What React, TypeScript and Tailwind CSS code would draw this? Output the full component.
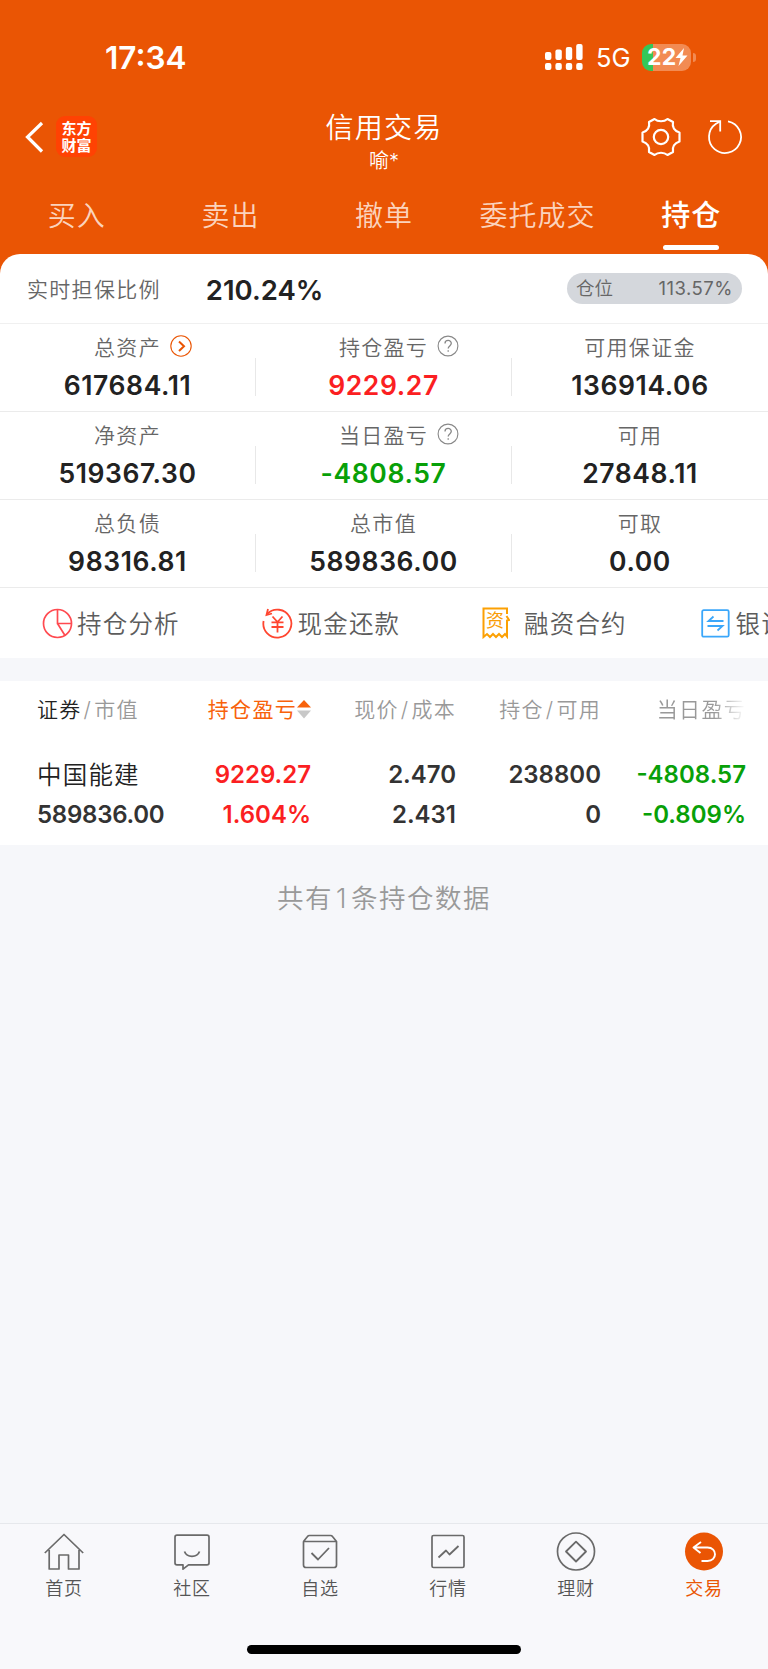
import type { ReactNode } from 'react';
import clsx from 'clsx';

type Metric = { label: string; value: string; color?: string; icon?: 'more' | 'help' };

const tabs = [
  { name: '买入' },
  { name: '卖出' },
  { name: '撤单' },
  { name: '委托成交' },
  { name: '持仓', active: true },
];

const metrics: Metric[][] = [
  [
    { label: '总资产', value: '617684.11', icon: 'more' },
    { label: '持仓盈亏', value: '9229.27', color: 'text-[#fb1f22]', icon: 'help' },
    { label: '可用保证金', value: '136914.06' },
  ],
  [
    { label: '净资产', value: '519367.30' },
    { label: '当日盈亏', value: '-4808.57', color: 'text-[#08a008]', icon: 'help' },
    { label: '可用', value: '27848.11' },
  ],
  [
    { label: '总负债', value: '98316.81' },
    { label: '总市值', value: '589836.00' },
    { label: '可取', value: '0.00' },
  ],
];

function StatusBar() {
  return (
    <div className="flex h-[100px] items-center pt-[14px] pl-[105px] text-white">
      <span className="w-[439px] pt-px text-[31.5px] leading-none font-semibold">17:34</span>
      <svg width="40" height="28" viewBox="0 0 40 28" fill="currentColor">
        <rect x="1" y="9" width="6.4" height="8" rx="2" />
        <rect x="11.4" y="6.6" width="6.4" height="10.4" rx="2" />
        <rect x="21.8" y="4" width="6.4" height="13" rx="2" />
        <rect x="32.2" y="1" width="6.4" height="16" rx="2" />
        <rect x="1" y="20" width="6.4" height="7" rx="2" />
        <rect x="11.4" y="20" width="6.4" height="7" rx="2" />
        <rect x="21.8" y="20" width="6.4" height="7" rx="2" />
        <rect x="32.2" y="20" width="6.4" height="7" rx="2" />
      </svg>
      <span className="ml-[12px] w-[46px] pt-[2px] text-[25.5px] leading-none">5G</span>
      <div className="flex h-[27px] w-[49px] items-center rounded-[9px] bg-[linear-gradient(to_right,#34c759_11px,#f28b53_11px)] pl-[5px]">
        <span className="text-[23px] leading-none font-bold tracking-[0.2px]">22</span>
        <svg width="13" height="18" viewBox="0 0 13 18" fill="currentColor" className="-ml-px shrink-0">
          <path d="M9 0 0.500 10H5.500L3.500 18 12.500 7.500H7.500z" />
        </svg>
      </div>
      <span className="ml-[2px] h-[9px] w-[3px] rounded-r-full bg-[#f28b53]" />
    </div>
  );
}

function NavBar() {
  return (
    <div className="flex h-[86px] pl-[24px] text-white">
      <svg width="20" height="32" viewBox="0 0 20 32" fill="none" stroke="currentColor" strokeWidth="3.2" className="mt-[21px]">
        <path d="M18 2 3.500 16 18 30.500" />
      </svg>
      <div className="mt-[16px] ml-[12px] flex h-[41px] w-[41px] flex-col items-center justify-center rounded-[9px] bg-[#ff4203] text-[15px] leading-[17px] font-bold">
        <span>东方</span>
        <span>财富</span>
      </div>
      <div className="ml-[187px] flex w-[200px] flex-col items-center pt-[11px]">
        <h1 className="text-[28px] leading-[34px] font-[350] tracking-[1.2px]">信用交易</h1>
        <p className="mt-[4px] text-[20px] leading-[24px] font-[350]">喻*</p>
      </div>
      <svg width="40" height="40" viewBox="-20 -20 40 40" fill="none" stroke="currentColor" strokeWidth="2.200" strokeLinejoin="round" className="mt-[17px] ml-[157px]">
        <circle r="7.200" />
        <path d="M-6.500 -18C-3 -15 3 -15 6.500 -18L12 -15C11 -10 13.500 -6 18.500 -4.500V4.500C13.500 6 11 10 12 15L6.500 18C3 15 -3 15 -6.500 18L-12 15C-11 10 -13.500 6 -18.500 4.500V-4.500C-13.500 -6 -11 -10 -12 -15Z" />
      </svg>
      <svg width="40" height="40" viewBox="-20 -20 40 40" fill="none" stroke="currentColor" strokeWidth="1.800" className="mt-[17px] ml-[24px]">
        <path d="M3 -15.700A16 16 0 1 1 -9 -13.200L-5 -15.500" />
        <path d="M-15 -15.800H-4.800V-5.500" />
      </svg>
    </div>
  );
}

function TabBar() {
  return (
    <div className="grid h-[68px] grid-cols-5">
      {tabs.map((tab) => (
        <div key={tab.name} className="flex flex-col items-center">
          <span
            className={clsx(
              'mt-[12px] leading-[36px] tracking-[1px] whitespace-nowrap',
              tab.active ? 'text-[29px] font-medium text-white' : 'text-[28px] font-[350] text-[#fbd3bd]',
            )}
          >
            {tab.name}
          </span>
          {tab.active && <span className="mt-[11px] h-[5px] w-[56px] rounded-full bg-white" />}
        </div>
      ))}
    </div>
  );
}

function LabelIcon({ kind }: { kind: 'more' | 'help' }) {
  if (kind === 'more') {
    return (
      <svg width="22" height="22" viewBox="0 0 22 22" fill="none" stroke="#ea5504" className="absolute top-px left-full ml-[9px]">
        <circle cx="11" cy="11" r="10.200" strokeWidth="1.100" />
        <path d="M9 6.500 14 11.300 9 16" strokeWidth="2" />
      </svg>
    );
  }
  return (
    <svg width="22" height="22" viewBox="0 0 22 22" fill="none" stroke="#888" strokeWidth="1.100" className="absolute top-px left-full ml-[9px]">
      <circle cx="11" cy="11" r="9.900" />
      <path d="M8 8.500C8 4.500 14.300 4.500 14.300 8.300 14.300 10.800 11.200 11 11.200 13.500" strokeWidth="1.300" />
      <path d="M11.200 15.300V16.700" strokeWidth="1.300" />
    </svg>
  );
}

function MetricCell({ metric, last }: { metric: Metric; last: boolean }) {
  return (
    <div className="flex">
      <div className="flex flex-1 flex-col items-center">
        <div className="relative mt-[10px] text-[21px] leading-[28px] font-[350] tracking-[1.3px] text-[#666]">
          {metric.label}
          {metric.icon && <LabelIcon kind={metric.icon} />}
        </div>
        <div className={clsx('mt-[8px] text-[26.5px] leading-[31px] font-semibold tracking-[0.600px]', metric.color ?? 'text-[#222]')}>
          {metric.value}
        </div>
      </div>
      {!last && <div className="mt-[34px] h-[38px] w-px bg-[#e8e8e8]" />}
    </div>
  );
}

function Summary() {
  return (
    <section className="rounded-t-[20px] bg-white">
      <div className="flex h-[70px] items-center border-b border-[#f0f0f0] pr-[26px] pl-[27px]">
        <span className="pt-[2px] text-[21px] font-[350] tracking-[1.3px] text-[#666]">实时担保比例</span>
        <span className="ml-[45px] pt-[2px] text-[27.5px] leading-[32px] font-semibold text-[#222]">210.24%</span>
        <div className="ml-auto flex h-[31px] w-[175px] items-center justify-between rounded-full bg-[#d4d7dc] pr-[9px] pl-[9px] text-[18.5px] font-[350] text-[#666]">
          <span>仓位</span>
          <span className="font-normal tracking-[0.500px]">113.57%</span>
        </div>
      </div>
      {metrics.map((row) => (
        <div key={row[0].label} className="grid h-[88px] grid-cols-3 border-b border-[#ebebeb]">
          {row.map((metric, i) => (
            <MetricCell key={metric.label} metric={metric} last={i === 2} />
          ))}
        </div>
      ))}
    </section>
  );
}

function Action({ icon, label, gap }: { icon: ReactNode; label: string; gap?: string }) {
  return (
    <div className="flex w-[219.500px] shrink-0 items-center">
      {icon}
      <span className={clsx('pt-[2px] text-[24.5px] leading-[30px] font-[350] tracking-[1.200px] whitespace-nowrap text-[#5c5c5c]', gap ?? 'ml-[4px]')}>
        {label}
      </span>
    </div>
  );
}

function QuickActions() {
  return (
    <div className="flex h-[70px] overflow-hidden bg-white pl-[42px]">
      <Action
        label="持仓分析"
        icon={
          <svg width="31" height="31" viewBox="0 0 31 31" fill="none" stroke="#ff4a50" strokeWidth="1.700">
            <circle cx="15.500" cy="15.500" r="14" />
            <path d="M15.500 1.500V15.500H29.500M15.500 15.500 23 27.500" />
          </svg>
        }
      />
      <Action
        label="现金还款"
        gap="ml-[5px]"
        icon={
          <svg width="31" height="31" viewBox="0 0 31 31" fill="none" stroke="#ff4630" strokeWidth="1.800">
            <path d="M5 6.200A14 14 0 1 1 1.600 13" />
            <path d="M6 1 4.500 7 10 5.500" />
            <path d="M10.500 8.500 15.500 14 20.500 8.500M9.500 14.300H21.500M9.500 19H21.500M15.500 14V24.500" />
          </svg>
        }
      />
      <Action
        label="融资合约"
        gap="ml-[14px]"
        icon={
          <div className="relative flex h-[32px] w-[29px] justify-center">
            <svg width="29" height="32" viewBox="0 0 29 32" fill="none" stroke="#fca003" strokeWidth="2" className="absolute inset-0">
              <path d="M26 7V1.500H2.500V30L6 27 9 30 12 27 15 30 18 27 21 30 24 27 26 29.500V13.500L28 13 25.500 9" />
            </svg>
            <span className="pr-[1px] text-[18px] leading-[28px] text-[#f99c06]">资</span>
          </div>
        }
      />
      <Action
        label="银证转账"
        gap="ml-[6px]"
        icon={
          <svg width="29" height="29" viewBox="0 0 29 29" fill="none" stroke="#3ba7fa" strokeWidth="1.800">
            <rect x="1.200" y="1.200" width="26.500" height="26.500" rx="1.500" />
            <path d="M22.500 12H7.500L12.500 7.500M6.500 17H21.500L16.500 21.500" />
          </svg>
        }
      />
    </div>
  );
}

function Cell({ top, bottom, color }: { top: string; bottom: string; color?: string }) {
  return (
    <div className={clsx('flex flex-col items-end', color)}>
      <span className="leading-[40px]">{top}</span>
      <span className="leading-[40px]">{bottom}</span>
    </div>
  );
}

function Holdings() {
  return (
    <section className="h-[164px] bg-white pl-[37px]">
      <div className="grid grid-cols-[129px_145px_145px_145px_145px] pt-[14px] text-[21px] leading-[30px] font-[350] tracking-[1.300px] text-[#999]">
        <div className="whitespace-nowrap">
          <span className="text-[#222]">证券</span>
          <span className="mx-[2px]">/</span>市值
        </div>
        <div className="flex items-center justify-end font-normal text-[#f8620b]">
          持仓盈亏
          <svg width="14" height="20" viewBox="0 0 14 20" className="mb-[2px]">
            <path d="M7 1 14 8.500H0z" fill="#f8620b" />
            <path d="M7 19.500 14 11.500H0z" fill="#c8c8c8" />
          </svg>
        </div>
        <div className="text-right">
          现价<span className="mx-[2px]">/</span>成本
        </div>
        <div className="text-right">
          持仓<span className="mx-[2px]">/</span>可用
        </div>
        <div className="[mask-image:linear-gradient(to_right,black_78%,transparent)] text-right">当日盈亏</div>
      </div>
      <div className="grid grid-cols-[129px_145px_145px_145px_145px] pt-[30px] text-[24px] font-semibold text-[#333]">
        <div className="flex flex-col items-start">
          <span className="text-[24.5px] leading-[40px] font-[350] tracking-[1.200px] whitespace-nowrap text-[#222]">中国能建</span>
          <span className="leading-[40px] tracking-[-0.250px]">589836.00</span>
        </div>
        <Cell top="9229.27" bottom="1.604%" color="text-[#fb1f22]" />
        <Cell top="2.470" bottom="2.431" />
        <Cell top="238800" bottom="0" />
        <Cell top="-4808.57" bottom="-0.809%" color="text-[#08a008]" />
      </div>
    </section>
  );
}

const navItems = [
  { name: '首页', icon: <path d="M0.800 20 20 1.500 39.200 20M5.200 17V36H15V22H24.500V36H35V17" /> },
  {
    name: '社区',
    icon: (
      <>
        <path d="M5 2.200H35Q37 2.200 37 4.200V30Q37 31.800 35 31.800H16.500L11 36.200V31.800H5Q3 31.800 3 30V4.200Q3 2.200 5 2.200Z" />
        <path d="M12.500 18.500C15 25 25 25 27.500 18.500" strokeWidth="1.800" />
      </>
    ),
  },
  {
    name: '自选',
    icon: (
      <>
        <path d="M3.500 8.500 7.500 3.500Q8.200 2.500 9.500 2.500H30.500Q31.800 2.500 32.500 3.500L36.500 8.500V32Q36.500 34.500 34 34.500H6Q3.500 34.500 3.500 32V8.500H36.500" />
        <path d="M11.500 20 18 26.500 29 15" strokeWidth="1.800" />
      </>
    ),
  },
  {
    name: '行情',
    icon: (
      <>
        <rect x="4" y="2.500" width="32" height="32" rx="1.500" />
        <path d="M10.500 24.500 18 17.500 21.500 21.500 30.500 13" strokeWidth="1.800" />
      </>
    ),
  },
  {
    name: '理财',
    icon: (
      <>
        <circle cx="20" cy="18.500" r="18.500" />
        <path d="M20 8.700 30 18.500 20 28.500 10 18.500Z" strokeWidth="1.800" />
      </>
    ),
  },
  {
    name: '交易',
    active: true,
    icon: (
      <>
        <circle cx="20" cy="18.500" r="19" fill="#ea5504" stroke="none" />
        <path d="M17 9 9.500 14.500 16.500 20M10 14.500H23.500C33.500 14.500 33.500 28 23.500 28H17.500" stroke="#fff" strokeWidth="1.900" />
      </>
    ),
  },
];

function BottomNav() {
  return (
    <footer className="mt-auto h-[146px] border-t border-[#e6e8ec] bg-[#f8f8fb]">
      <div className="grid grid-cols-6">
        {navItems.map((item) => (
          <div key={item.name} className="flex flex-col items-center pt-[8px]">
            <svg width="40" height="40" viewBox="0 -1 40 40" fill="none" stroke="#6a6a6a" strokeWidth="1.700" strokeLinejoin="round">
              {item.icon}
            </svg>
            <span
              className={clsx(
                'mt-[5px] text-[18px] leading-[24px] tracking-[0.800px]',
                item.active ? 'text-[#ea5504]' : 'font-[350] text-[#555]',
              )}
            >
              {item.name}
            </span>
          </div>
        ))}
      </div>
      <div className="mx-auto mt-[44px] h-[9px] w-[274px] rounded-full bg-black" />
    </footer>
  );
}

export default function App() {
  return (
    <div className="flex h-[1669px] w-[768px] flex-col overflow-hidden bg-[#f6f7fa] font-['Inter','Noto_Sans_CJK_SC',sans-serif]">
      <div className="bg-[#ea5504]">
        <StatusBar />
        <NavBar />
        <TabBar />
        <Summary />
      </div>
      <QuickActions />
      <div className="h-[23px]" />
      <Holdings />
      <p className="mt-[36px] text-center text-[26.500px] leading-[34px] font-[350] tracking-[1.500px] text-[#999]">
        共有<span className="mx-[3px]">1</span>条持仓数据
      </p>
      <BottomNav />
    </div>
  );
}
